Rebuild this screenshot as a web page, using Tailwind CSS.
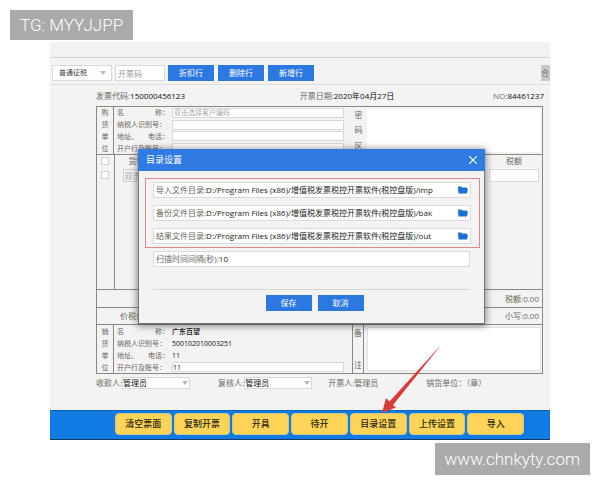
<!DOCTYPE html>
<html lang="zh-CN">
<head>
    <meta charset="UTF-8">
    <meta name="viewport" content="width=device-width, initial-scale=1.0">
    <title>发票开具 - 目录设置</title>
    <script src="https://cdn.jsdelivr.net/npm/@tailwindcss/browser@4"></script>
</head>
<body class="bg-white font-['Open_Sans','Noto_Sans_CJK_SC',sans-serif] text-[8px] leading-3 text-[#6b675f]">

    <div class="relative px-[50px] pt-[42px] pb-10">

        <!-- Invoice window -->
        <main class="relative bg-[#f3f3f3]">
            <div class="h-4 border-b border-[#d4d4d4]"></div>

            <!-- Toolbar -->
            <div class="flex h-[27px] items-center border-b border-[#dedede] pl-0.5 pt-1">
                <div class="relative w-[60px]">
                    <select aria-label="征税方式" class="block h-4 w-full appearance-none border border-[#d9d9d9] bg-white pl-1.5 text-[7px] leading-3 text-[#444]">
                        <option>普通征税</option>
                    </select>
                    <svg class="pointer-events-none absolute right-1.5 top-1.5 h-1 w-1.5" viewBox="0 0 6 4"><path d="M0 0h6L3 4z" fill="#b9b9b9"/></svg>
                </div>
                <input type="text" aria-label="开票码" placeholder="开票码" class="ml-[3px] h-4 w-[50px] border border-[#d9d9d9] bg-white px-0.5 placeholder:text-[#999]">
                <div class="ml-[3px] flex gap-1 text-white">
                    <button class="h-4 w-[46px] bg-[#2b78e0]">折扣行</button>
                    <button class="h-4 w-[46px] bg-[#2b78e0]">删除行</button>
                    <button class="h-4 w-[46px] bg-[#2b78e0]">新增行</button>
                </div>
                <button class="ml-auto h-4 w-[9px] overflow-hidden bg-[#c9c9c9] text-left text-[#777]">合</button>
            </div>

            <!-- Invoice head -->
            <div class="flex h-[21px] items-center justify-between pl-[46px] pr-1.5">
                <span>发票代码:<b class="font-normal text-[#111]">150000456123</b></span>
                <span class="pl-4">开票日期:<b class="font-normal text-[#111]">2020年04月27日</b></span>
                <span>NO:<b class="font-normal text-[#111]">84461237</b></span>
            </div>

            <div class="ml-[46px] mr-[7px] border border-[#8b877f]">
                <!-- Buyer -->
                <section class="flex h-12 border-b border-[#8b877f]">
                    <div class="flex w-[17px] flex-col items-center justify-around border-r border-[#8b877f] text-[7px] leading-[11px]">
                        <span>购</span><span>货</span><span>单</span><span>位</span>
                    </div>
                    <div class="flex flex-1 flex-col justify-around pl-[3px] text-[7px] leading-[11px]">
                        <div class="flex items-center">
                            <label for="buyerName" class="flex w-[55px] justify-between pr-[3px]"><span>名</span><span>称：</span></label>
                            <input id="buyerName" type="text" placeholder="双击选择客户编码" class="h-[10px] min-w-0 flex-1 border border-[#d9d9d9] bg-white px-px placeholder:text-[#aaa]">
                        </div>
                        <div class="flex items-center">
                            <label for="buyerTax" class="w-[55px]">纳税人识别号：</label>
                            <input id="buyerTax" type="text" class="h-[10px] min-w-0 flex-1 border border-[#d9d9d9] bg-white">
                        </div>
                        <div class="flex items-center">
                            <label for="buyerAddr" class="flex w-[55px] justify-between pr-[3px]"><span>地址、</span><span>电话：</span></label>
                            <input id="buyerAddr" type="text" class="h-[10px] min-w-0 flex-1 border border-[#d9d9d9] bg-white">
                        </div>
                        <div class="flex items-center">
                            <label for="buyerBank" class="w-[55px]">开户行及账号：</label>
                            <input id="buyerBank" type="text" class="h-[10px] min-w-0 flex-1 border border-[#d9d9d9] bg-white">
                        </div>
                    </div>
                    <label for="cipher" class="flex w-[23px] flex-col items-center justify-around pl-1.5">
                        <span>密</span><span>码</span><span>区</span>
                    </label>
                    <textarea id="cipher" class="my-0.5 mr-px w-[174px] resize-none bg-white"></textarea>
                </section>

                <!-- Goods -->
                <section class="flex h-[135px] border-b border-[#8b877f]">
                    <table class="h-full w-full table-fixed">
                        <thead>
                            <tr class="h-3">
                                <th class="w-[17px] border-r border-[#8b877f] p-0"><input type="checkbox" aria-label="全选" class="mx-auto block size-2 appearance-none border border-[#cfcfcf] bg-white"></th>
                                <th class="p-0 pl-3.5 text-left font-normal">货物</th>
                                <th class="w-[56px] p-0 text-center font-normal">税额</th>
                            </tr>
                        </thead>
                        <tbody>
                            <tr class="align-top">
                                <td class="border-r border-[#8b877f] p-0 pt-1"><input type="checkbox" aria-label="选择行" class="mx-auto block size-2 appearance-none border border-[#cfcfcf] bg-white"></td>
                                <td class="p-0 pl-2 pt-0.5"><input type="text" aria-label="货物名称" placeholder="双击选择" class="block h-[13px] w-[90px] border border-[#cfcfcf] px-px placeholder:text-[#aaa]"></td>
                                <td class="p-0 pl-[3px] pr-[3px] pt-0.5"><input type="text" aria-label="税额" class="block h-[13px] w-full border border-[#d9d9d9] bg-white"></td>
                            </tr>
                        </tbody>
                    </table>
                </section>

                <!-- Totals -->
                <div class="flex h-[18px] items-center justify-end border-b border-[#8b877f] pr-[3px]">税额:0.00</div>
                <div class="flex h-[17px] items-center justify-between border-b border-[#8b877f] pl-[23px] pr-[3px]">
                    <span>价税合计</span>
                    <span>小写:0.00</span>
                </div>

                <!-- Seller -->
                <section class="flex h-12">
                    <div class="flex w-[17px] flex-col items-center justify-around border-r border-[#8b877f] text-[7px] leading-[11px]">
                        <span>销</span><span>货</span><span>单</span><span>位</span>
                    </div>
                    <div class="flex flex-1 flex-col justify-around pl-[3px] pr-2 text-[7px] leading-[11px]">
                        <div class="flex"><span class="flex w-[55px] justify-between pr-[3px]"><span>名</span><span>称：</span></span><span class="font-medium text-[#111]">广东百望</span></div>
                        <div class="flex"><span class="w-[55px]">纳税人识别号：</span><span class="text-[#111]">500102010003251</span></div>
                        <div class="flex"><span class="flex w-[55px] justify-between pr-[3px]"><span>地址、</span><span>电话：</span></span><span class="text-[#111]">11</span></div>
                        <div class="flex items-center">
                            <label for="sellerBank" class="w-[55px]">开户行及账号：</label>
                            <input id="sellerBank" type="text" value="11" class="h-[10px] min-w-0 flex-1 border border-[#d9d9d9] bg-white text-[#111]">
                        </div>
                    </div>
                    <label for="remark" class="flex w-3 flex-col items-center justify-between border-x border-[#8b877f] py-0.5">
                        <span>备</span><span>注</span>
                    </label>
                    <textarea id="remark" class="my-0.5 ml-[3px] mr-px w-[174px] resize-none border border-[#e2e2e2] bg-white"></textarea>
                </section>
            </div>

            <!-- Signatures -->
            <div class="flex h-9 items-start pl-[46px] pt-[3px]">
                <label for="payee">收款人:</label>
                <div class="relative w-[68px]">
                    <select id="payee" class="block h-3 w-full appearance-none border border-[#d9d9d9] bg-white leading-[10px] text-[#111]"><option>管理员</option></select>
                    <svg class="pointer-events-none absolute right-0.5 top-1 h-1 w-1.5" viewBox="0 0 6 4"><path d="M0 0h6L3 4z" fill="#b9b9b9"/></svg>
                </div>
                <label for="checker" class="ml-7">复核人:</label>
                <div class="relative w-[68px]">
                    <select id="checker" class="block h-3 w-full appearance-none border border-[#d9d9d9] bg-white leading-[10px] text-[#111]"><option>管理员</option></select>
                    <svg class="pointer-events-none absolute right-0.5 top-1 h-1 w-1.5" viewBox="0 0 6 4"><path d="M0 0h6L3 4z" fill="#b9b9b9"/></svg>
                </div>
                <span class="ml-4">开票人:管理员</span>
                <span class="ml-12">销货单位：（章）</span>
            </div>

            <!-- Bottom actions -->
            <nav class="flex h-[30px] gap-0.5 border-b border-t border-b-[#123a63] border-t-[#0d62b8] bg-[#127be3] pb-1 pl-[65px] pr-[26px] pt-0.5 text-[9px] font-medium text-[#2b2412]">
                <button class="flex-1 rounded-sm border border-[#c9c98c] bg-[#fdd458]">清空票面</button>
                <button class="flex-1 rounded-sm border border-[#c9c98c] bg-[#fdd458]">复制开票</button>
                <button class="flex-1 rounded-sm border border-[#c9c98c] bg-[#fdd458]">开具</button>
                <button class="flex-1 rounded-sm border border-[#c9c98c] bg-[#fdd458]">待开</button>
                <button class="flex-1 rounded-sm border border-[#c9c98c] bg-[#fdd458]">目录设置</button>
                <button class="flex-1 rounded-sm border border-[#c9c98c] bg-[#fdd458]">上传设置</button>
                <button class="flex-1 rounded-sm border border-[#c9c98c] bg-[#fdd458]">导入</button>
            </nav>

            <!-- Directory settings dialog -->
            <div role="dialog" aria-labelledby="dialogTitle" class="absolute left-[88px] right-[65px] top-[107px] border border-[#777] bg-[#f3f3f3] shadow-[0_1px_7px_1px_rgba(0,0,0,0.45)]">
                <div class="-mx-px -mt-px flex h-[22px] items-center justify-between bg-[#2f7be2] px-2 text-white">
                    <h2 id="dialogTitle" class="text-[9px]">目录设置</h2>
                    <button aria-label="关闭"><svg class="size-2" viewBox="0 0 8 8"><path d="M0 0l8 8M8 0L0 8" stroke="#fff" stroke-width="1.1"/></svg></button>
                </div>
                <div class="ml-1.5 mr-1 mt-[7px] flex flex-col gap-[7px] border border-[#e08a86] pl-[7px] pr-2 py-[3px]">
                    <div class="flex h-4 items-center border border-[#dadada] bg-white px-0.5">
                        <label for="impDir">导入文件目录:</label>
                        <input id="impDir" type="text" value="D:/Program Files (x86)/增值税发票税控开票软件(税控盘版)/imp" class="min-w-0 flex-1 text-[#222]">
                        <button aria-label="选择导入目录"><svg class="h-2 w-[10px]" viewBox="0 0 10 8"><path d="M0 7V.5h3.5l.8 1H9V3H1.6z" fill="#2673d0"/><path d="M1.3 2.8H10L9 7.6H.3z" fill="#1f6fd2"/></svg></button>
                    </div>
                    <div class="flex h-4 items-center border border-[#dadada] bg-white px-0.5">
                        <label for="bakDir">备份文件目录:</label>
                        <input id="bakDir" type="text" value="D:/Program Files (x86)/增值税发票税控开票软件(税控盘版)/bak" class="min-w-0 flex-1 text-[#222]">
                        <button aria-label="选择备份目录"><svg class="h-2 w-[10px]" viewBox="0 0 10 8"><path d="M0 7V.5h3.5l.8 1H9V3H1.6z" fill="#2673d0"/><path d="M1.3 2.8H10L9 7.6H.3z" fill="#1f6fd2"/></svg></button>
                    </div>
                    <div class="flex h-4 items-center border border-[#dadada] bg-white px-0.5">
                        <label for="outDir">结果文件目录:</label>
                        <input id="outDir" type="text" value="D:/Program Files (x86)/增值税发票税控开票软件(税控盘版)/out" class="min-w-0 flex-1 text-[#222]">
                        <button aria-label="选择结果目录"><svg class="h-2 w-[10px]" viewBox="0 0 10 8"><path d="M0 7V.5h3.5l.8 1H9V3H1.6z" fill="#2673d0"/><path d="M1.3 2.8H10L9 7.6H.3z" fill="#1f6fd2"/></svg></button>
                    </div>
                </div>
                <div class="mx-[14px] mt-[3px] flex h-4 items-center border border-[#dadada] bg-white px-0.5">
                    <label for="interval">扫描时间间隔(秒):</label>
                    <input id="interval" type="text" value="10" class="min-w-0 flex-1 text-[#222]">
                </div>
                <div class="mx-[14px] mt-[22px] flex justify-center gap-1.5 border-t border-[#d6d6d6] pb-3 pl-1.5 pt-[5px] text-white">
                    <button class="h-4 w-[46px] bg-[#2b78e0]">保存</button>
                    <button class="h-4 w-[46px] bg-[#2b78e0]">取消</button>
                </div>
            </div>

            <!-- Pointer to the 目录设置 button -->
            <svg class="pointer-events-none absolute right-[107px] top-[302px] h-[70px] w-[62px]" viewBox="0 0 62 70">
                <path d="M61 0L12 61L15 63.500L1 69L5 54L8.500 57.500z" fill="#d93a3a"/>
            </svg>
        </main>

        <!-- Contact badges -->
        <div class="absolute left-[10px] top-[10px] flex h-[30px] items-center bg-[#aaa] px-[10px] font-['Roboto',sans-serif] text-[17px] font-light text-white">TG: MYYJJPP</div>
        <a href="#" class="absolute right-[10px] top-[443px] flex h-8 items-center bg-[#aaa] px-[10px] font-['Roboto',sans-serif] text-[17px] font-light text-white">www.chnkyty.com</a>
    </div>

</body>
</html>
